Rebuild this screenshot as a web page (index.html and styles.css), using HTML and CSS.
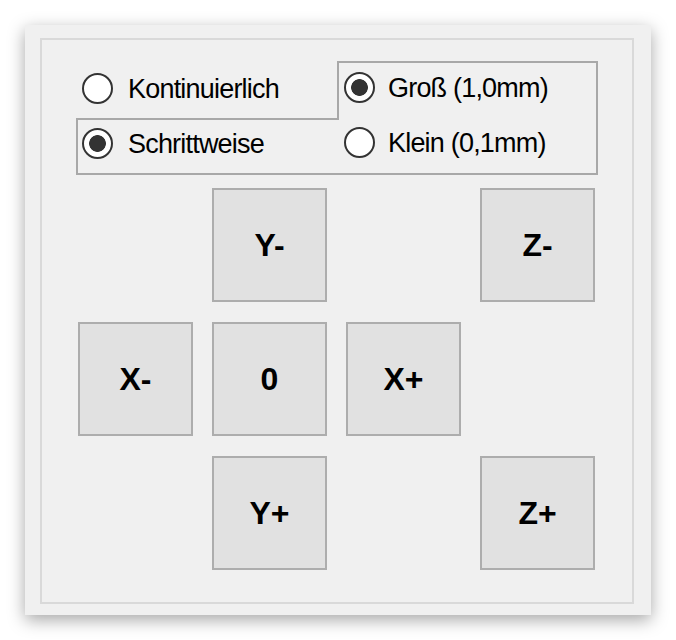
FILE: index.html
```html
<!DOCTYPE html>
<html lang="de">
<head>
    <meta charset="UTF-8">
    <title>Achsen verfahren</title>
    <link rel="stylesheet" href="styles.css">
</head>
<body>

    <div class="window">
        <div class="group">

            <!-- Modus und Schrittweite -->
            <div class="modes">
                <div class="row-top">
                    <label class="opt opt-tl"><input type="radio" name="modus"><span>Kontinuierlich</span></label>
                    <label class="opt opt-tr"><input type="radio" name="schritt" checked><span>Groß (1,0mm)</span></label>
                </div>
                <div class="row-bottom">
                    <label class="opt opt-bl"><input type="radio" name="modus" checked><span>Schrittweise</span></label>
                    <label class="opt opt-br"><input type="radio" name="schritt"><span>Klein (0,1mm)</span></label>
                </div>
            </div>

            <!-- Tasten zum Verfahren -->
            <div class="pad">
                <button class="btn-y-minus">Y-</button>
                <button class="btn-z-minus">Z-</button>
                <button class="btn-x-minus">X-</button>
                <button class="btn-null">0</button>
                <button class="btn-x-plus">X+</button>
                <button class="btn-y-plus">Y+</button>
                <button class="btn-z-plus">Z+</button>
            </div>

        </div>
    </div>

</body>
</html>
```

FILE: styles.css
```css
/* Fenster im Stil von Windows Forms */
body {
    margin: 0;
    background-color: #fff;
    font-family: "Liberation Sans", Arial, sans-serif;
    color: #000;
}
.window {
    width: 626px;
    height: 590px;
    margin: 25px;
    padding: 13px 0 0 15px;
    box-sizing: border-box;
    background-color: #f0f0f0;
    box-shadow: 0 5px 16px rgba(0, 0, 0, 0.35);
}
.group {
    width: 594px;
    height: 566px;
    padding: 21px 0 0 34px;
    box-sizing: border-box;
    border: 2px solid #d9d9d9;
}

/* Radio-Felder */
.modes {
    width: 522px;
}
.row-top, .row-bottom {
    display: flex;
    height: 57px;
}
.row-bottom {
    border: 2px solid #a8a8a8;
    border-top: 0;
    box-sizing: border-box;
}
.opt {
    display: flex;
    align-items: flex-start;
    height: 100%;
    box-sizing: border-box;
    font-size: 27px;
    letter-spacing: -0.8px;
}
.opt span {
    line-height: 31px;
    padding-top: 1px;
}
.opt-tl {
    width: 261px;
    padding: 12px 0 0 6px;
}
.opt-tr {
    width: 261px;
    padding: 9px 0 0 5px;
    border: 2px solid #a8a8a8;
    border-bottom: 0;
}
.opt-bl {
    width: 261px;
    padding: 8px 0 0 4px;
    border-top: 2px solid #a8a8a8;
}
.opt-br {
    flex: 1;
    padding: 9px 0 0 5px;
}
.opt input {
    appearance: none;
    -webkit-appearance: none;
    flex: none;
    width: 31px;
    height: 31px;
    margin: 0 15px 0 0;
    border: 2px solid #333;
    border-radius: 50%;
    background-color: #fff;
    box-sizing: border-box;
}
.opt-tr input, .opt-br input {
    margin-right: 13px;
}
.opt input:checked {
    background: radial-gradient(circle, #333 0 8px, #fff 8.7px);
}

/* Tastenfeld */
.pad {
    display: grid;
    grid-template-columns: repeat(4, 115px);
    grid-template-rows: repeat(3, 114px);
    column-gap: 19px;
    row-gap: 20px;
    margin: 13px 0 0 2px;
}
.pad button {
    padding: 0;
    border: 2px solid #adadad;
    border-radius: 0;
    background-color: #e1e1e1;
    color: #000;
    font-family: "Liberation Sans", Arial, sans-serif;
    font-weight: bold;
    font-size: 32px;
}
.btn-y-minus { grid-column: 2; grid-row: 1; }
.btn-z-minus { grid-column: 4; grid-row: 1; }
.btn-x-minus { grid-column: 1; grid-row: 2; }
.btn-null    { grid-column: 2; grid-row: 2; }
.btn-x-plus  { grid-column: 3; grid-row: 2; }
.btn-y-plus  { grid-column: 2; grid-row: 3; }
.btn-z-plus  { grid-column: 4; grid-row: 3; }
```
